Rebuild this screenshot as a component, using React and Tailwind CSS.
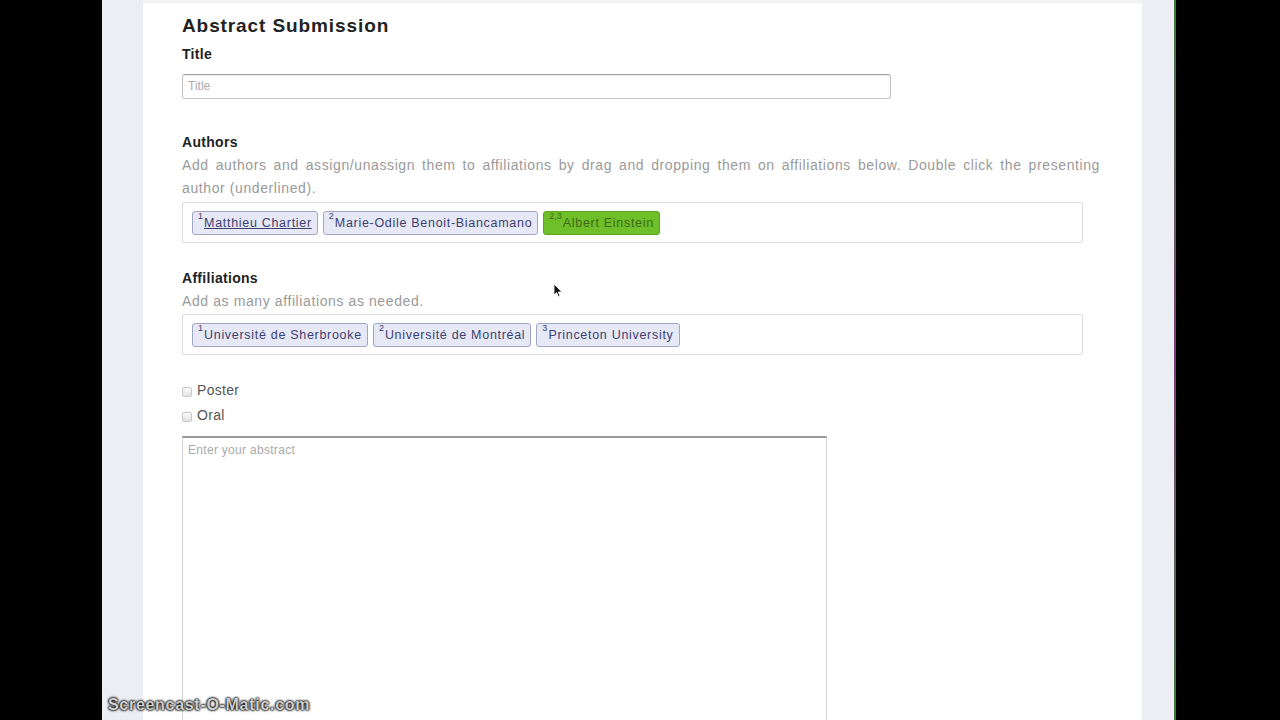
import React from 'react';

const authors = [
  { sup: '1', name: 'Matthieu Chartier', presenting: true },
  { sup: '2', name: 'Marie-Odile Benoit-Biancamano' },
  { sup: '2,3', name: 'Albert Einstein', active: true },
];

const affiliations = [
  { sup: '1', name: 'Université de Sherbrooke' },
  { sup: '2', name: 'Université de Montréal' },
  { sup: '3', name: 'Princeton University' },
];

const Tag = ({ sup, name, presenting, active }) => (
  <span
    className={
      'inline-flex items-start h-[24px] px-[5px] pt-[3px] rounded-[3px] border text-[12.5px] leading-[17px] tracking-[0.7px] ' +
      (active
        ? 'bg-[#6fbf2a] border-[#5da51f] text-[#3d6a14]'
        : 'bg-[#e6e8f6] border-[#a2a6c6] text-[#3b4070]')
    }
  >
    <sup className="text-[9px] leading-none mt-[1px] mr-[1px] tracking-normal">{sup}</sup>
    <span className={presenting ? 'underline' : ''}>{name}</span>
  </span>
);

const TagBox = ({ items }) => (
  <div className="w-[901px] h-[41px] border border-[#dcdcdc] rounded-[2px] pl-[9px] pt-[8px] flex gap-[5px]">
    {items.map((it) => (
      <Tag key={it.name} {...it} />
    ))}
  </div>
);

const Check = ({ label }) => (
  <label className="flex items-center leading-[25px] text-[14px] text-[#555] tracking-[0.3px]">
    <span className="w-[10px] h-[10px] mr-[5px] mt-[2px] rounded-[2px] border border-[#c8c8c8] bg-gradient-to-b from-[#fafafa] to-[#e2e2e2]" />
    {label}
  </label>
);

export default function App() {
  return (
    <div className="relative w-[1280px] h-[720px] overflow-hidden bg-black flex font-['Liberation_Sans',Arial,sans-serif]">
      <div className="w-[102px] shrink-0 bg-black" />
      <div className="w-[41px] shrink-0 bg-[#eceef3]" />
      <div className="w-[999px] shrink-0 bg-white pl-[39px] pt-[11px] border-t-[3px] border-[#f1f1f1]">
        <h1 className="text-[19px] leading-[24px] font-bold text-[#222] tracking-[0.9px]">Abstract Submission</h1>

        <div className="mt-[6px] text-[14px] leading-[20px] font-bold text-[#222] tracking-[0.3px]">Title</div>
        <div className="mt-[10px] w-[709px] h-[25px] border border-[#c4c4c4] border-t-[#a0a0a0] rounded-[3px] shadow-[inset_0_1px_1px_rgba(0,0,0,0.08)] pl-[5px] text-[12px] leading-[23px] text-[#aaa]">
          Title
        </div>

        <div className="mt-[33px] text-[14px] leading-[20px] font-bold text-[#222] tracking-[0.3px]">Authors</div>
        <p className="mt-[2px] w-[918px] text-[14px] leading-[23px] text-[#9a9a9a] text-justify tracking-[0.6px]">
          Add authors and assign/unassign them to affiliations by drag and dropping them on affiliations below. Double click the presenting author (underlined).
        </p>
        <div className="mt-[2px]">
          <TagBox items={authors} />
        </div>

        <div className="mt-[25px] text-[14px] leading-[20px] font-bold text-[#222] tracking-[0.3px]">Affiliations</div>
        <p className="mt-[2px] text-[14px] leading-[23px] text-[#9a9a9a] tracking-[0.6px]">Add as many affiliations as needed.</p>
        <div className="mt-[1px]">
          <TagBox items={affiliations} />
        </div>

        <div className="mt-[23px]">
          <Check label="Poster" />
          <Check label="Oral" />
        </div>

        <div className="mt-[8px] w-[645px] h-[300px] border border-[#d4d4d4] border-t-[2px] border-t-[#9a9a9a] pl-[5px] pt-[5px] text-[12px] leading-[14px] text-[#aaa] tracking-[0.3px]">
          Enter your abstract
        </div>
      </div>
      <div className="w-[32px] shrink-0 bg-[#eceef3]" />
      <div className="w-[2px] shrink-0 bg-gradient-to-b from-[#3b7a3b] via-[#7a3b7a] to-[#3b7a3b]" />
      <div className="flex-1 bg-black" />

      <svg className="absolute left-[553px] top-[283px]" width="10" height="15" viewBox="0 0 10 15">
        <path d="M1 1 L1 12 L3.6 9.6 L5.4 13.6 L7 12.9 L5.3 9 L8.8 9 Z" fill="#111" stroke="#fff" strokeWidth="0.8" />
      </svg>

      <div className="absolute left-[108px] top-[696px] text-[16px] leading-[18px] font-bold text-[#cfcfcf] tracking-[0.7px] [text-shadow:0_0_2px_#000,0_0_2px_#000,0_0_3px_#000]">
        Screencast-O-Matic.com
      </div>
    </div>
  );
}
